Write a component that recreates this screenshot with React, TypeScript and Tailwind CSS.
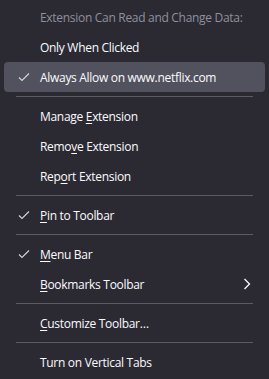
import React from 'react'

type Item =
  | { kind: 'header'; label: string }
  | { kind: 'sep' }
  | {
      kind: 'item'
      label: string
      accessKey?: number
      checked?: boolean
      active?: boolean
      submenu?: boolean
    }

const items: Item[] = [
  { kind: 'header', label: 'Extension Can Read and Change Data:' },
  { kind: 'item', label: 'Only When Clicked' },
  { kind: 'item', label: 'Always Allow on www.netflix.com', checked: true, active: true },
  { kind: 'sep' },
  { kind: 'item', label: 'Manage Extension', accessKey: 7 },
  { kind: 'item', label: 'Remove Extension', accessKey: 4 },
  { kind: 'item', label: 'Report Extension', accessKey: 3 },
  { kind: 'sep' },
  { kind: 'item', label: 'Pin to Toolbar', accessKey: 0, checked: true },
  { kind: 'sep' },
  { kind: 'item', label: 'Menu Bar', accessKey: 0, checked: true },
  { kind: 'item', label: 'Bookmarks Toolbar', accessKey: 0, submenu: true },
  { kind: 'sep' },
  { kind: 'item', label: 'Customize Toolbar…', accessKey: 0 },
  { kind: 'sep' },
  { kind: 'item', label: 'Turn on Vertical Tabs' },
]

const Check = () => (
  <svg width="12" height="10" viewBox="0 0 12 10" fill="none">
    <path d="M1 5.5 L4 8.5 L11 1.5" stroke="#d4d4dc" strokeWidth="1.1" />
  </svg>
)

const Chevron = () => (
  <svg width="8" height="12" viewBox="0 0 8 12" fill="none">
    <path d="M1.5 1 L6.5 6 L1.5 11" stroke="#fbfbfe" strokeWidth="1.3" />
  </svg>
)

function Label({ text, accessKey }: { text: string; accessKey?: number }) {
  if (accessKey === undefined) return <>{text}</>
  return (
    <>
      {text.slice(0, accessKey)}
      <span className="underline underline-offset-2 decoration-1">{text[accessKey]}</span>
      {text.slice(accessKey + 1)}
    </>
  )
}

export default function App() {
  return (
    <div
      className="w-[269px] h-[379px] bg-[#2b2a33] py-[2px] text-[12px] tracking-[-0.3px] text-[#fbfbfe] overflow-hidden"
      style={{ fontFamily: '"Open Sans", Lato, sans-serif' }}
    >
      {items.map((it, i) => {
        if (it.kind === 'sep') {
          return (
            <div key={i} className="h-[9px] flex items-center px-4">
              <div className="h-px w-full bg-[#5b5b66]" />
            </div>
          )
        }
        if (it.kind === 'header') {
          return (
            <div key={i} className="h-[30px] flex items-center pl-10 pt-[1px] text-[#8f8f9d] whitespace-nowrap">
              {it.label}
            </div>
          )
        }
        return (
          <div key={i} className="h-[30px] px-1">
            <div
              className={`h-full flex items-center rounded ${it.active ? 'bg-[#52525e]' : ''}`}
            >
              <div className="w-9 flex justify-end pr-[10px]">{it.checked && <Check />}</div>
              <div className="flex-1 whitespace-nowrap pt-[1px]">
                <Label text={it.label} accessKey={it.accessKey} />
              </div>
              {it.submenu && (
                <div className="pr-[14px] flex items-center">
                  <Chevron />
                </div>
              )}
            </div>
          </div>
        )
      })}
    </div>
  )
}
